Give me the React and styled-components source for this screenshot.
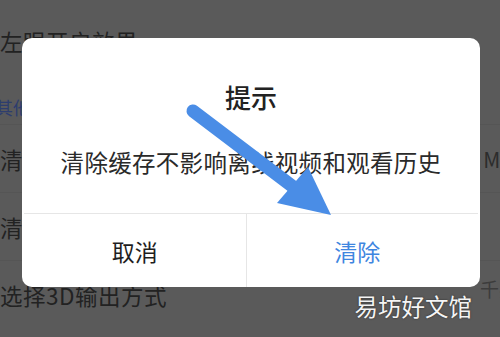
import React from 'react';
import styled, { createGlobalStyle } from 'styled-components';

const GlobalStyle = createGlobalStyle`
  html, body {
    margin: 0;
    padding: 0;
    background: #5a5a5a;
  }
  body {
    font-family: "Noto Sans CJK SC", "Noto Sans", sans-serif;
  }
`;

const Screen = styled.div`
  position: relative;
  width: 500px;
  height: 337px;
  overflow: hidden;
  background: #5a5a5a;
`;

const List = styled.div`
  width: 514px;
  padding-top: 7px;
  display: flex;
  flex-direction: column;
`;

const Row = styled.div`
  height: 68px;
  display: flex;
  align-items: center;
  justify-content: space-between;
  border-bottom: 1px solid ${p => (p.line ? '#555' : 'transparent')};
  box-sizing: border-box;
`;

const Label = styled.span`
  font-size: 22.5px;
  color: #222;
  letter-spacing: 0.5px;
`;

const Value = styled.span`
  font-size: ${p => p.size || 21}px;
  color: ${p => p.tone || '#2c2c2c'};
  margin-top: ${p => p.offset || 0}px;
  margin-right: ${p => p.shift || 0}px;
`;

const Section = styled.div`
  height: 50px;
  display: flex;
  align-items: flex-end;
  padding-bottom: 4px;
  box-sizing: border-box;
  margin-left: -5px;
  border-bottom: 1px solid #555;
`;

const SectionTitle = styled.span`
  font-size: 18px;
  color: #2d3d6e;
`;

const Dialog = styled.div`
  position: absolute;
  left: 22px;
  top: 38px;
  width: 458px;
  height: 249px;
  background: #fff;
  border-radius: 10px;
  display: flex;
  flex-direction: column;
  overflow: hidden;
`;

const Body = styled.div`
  height: 175px;
  display: flex;
  flex-direction: column;
  align-items: center;
`;

const Title = styled.div`
  margin-top: 42px;
  font-size: 26px;
  line-height: 34px;
  font-weight: 500;
  color: #222;
`;

const Message = styled.div`
  margin-top: 32px;
  font-size: 23.5px;
  line-height: 32px;
  color: #2a2a2a;
  letter-spacing: 0.3px;
`;

const Footer = styled.div`
  flex: 1;
  display: flex;
  border-top: 1px solid #e6e6e6;
  margin: 0 2px;
`;

const Button = styled.div`
  flex: 1;
  display: flex;
  align-items: center;
  justify-content: center;
  font-size: 23px;
  color: ${p => (p.primary ? '#3f86e0' : '#1e1e1e')};
  padding-right: ${p => (p.primary ? 10 : 0)}px;
  & + & {
    border-left: 1px solid #e6e6e6;
  }
`;

const Arrow = styled.svg`
  position: absolute;
  left: 0;
  top: 0;
  pointer-events: none;
`;

const Watermark = styled.div`
  position: absolute;
  right: 28px;
  bottom: 18px;
  font-size: 23.5px;
  line-height: 26px;
  color: #f4f4f4;
  text-shadow: 0 0 2px rgba(0, 0, 0, 0.6);
`;

export default function App() {
  return (
    <Screen>
      <GlobalStyle />
      <List>
        <Row>
          <Label>左眼开启效果</Label>
        </Row>
        <Section>
          <SectionTitle>其他</SectionTitle>
        </Section>
        <Row line>
          <Label>清除缓存</Label>
          <Value>MB</Value>
        </Row>
        <Row line>
          <Label>清晰度设置</Label>
        </Row>
        <Row>
          <Label>选择3D输出方式</Label>
          <Value size={19} tone="#3c3c3c" offset={-12} shift={-4}>千兆</Value>
        </Row>
      </List>

      <Dialog>
        <Body>
          <Title>提示</Title>
          <Message>清除缓存不影响离线视频和观看历史</Message>
        </Body>
        <Footer>
          <Button>取消</Button>
          <Button primary>清除</Button>
        </Footer>
      </Dialog>

      <Arrow width="500" height="337" viewBox="0 0 500 337">
        <line x1="193" y1="111" x2="292" y2="186" stroke="#4a8de6" strokeWidth="13" strokeLinecap="round" />
        <polygon points="308,167 277,203 331,215" fill="#4a8de6" />
      </Arrow>

      <Watermark>易坊好文馆</Watermark>
    </Screen>
  );
}
